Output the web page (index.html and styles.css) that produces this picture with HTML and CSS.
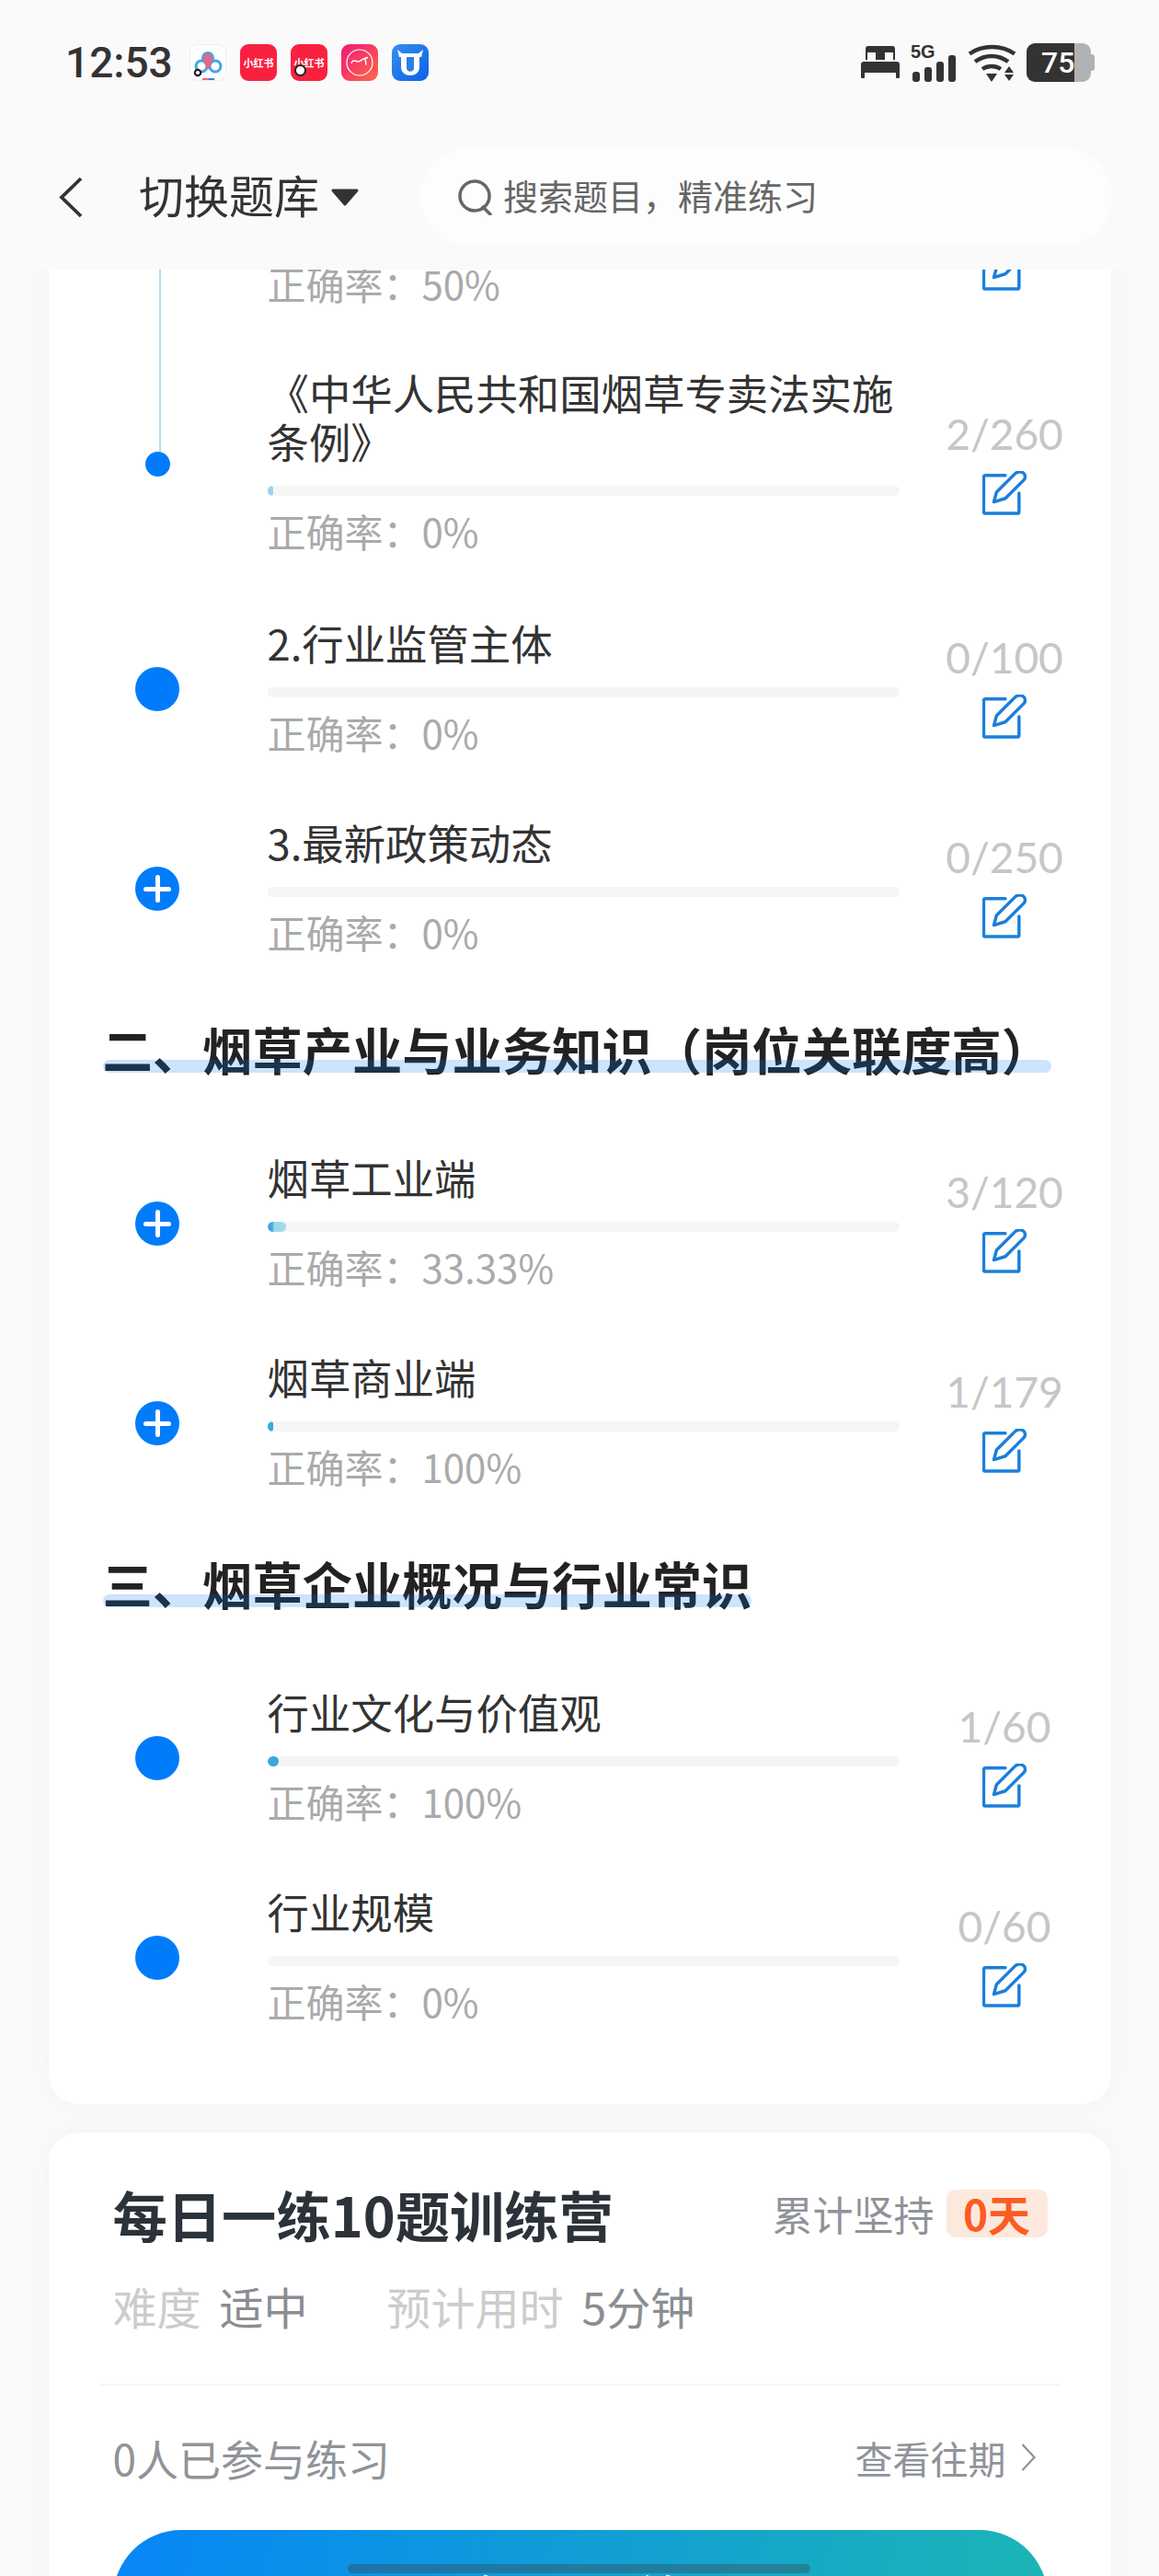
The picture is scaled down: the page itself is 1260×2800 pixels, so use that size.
FILE: index.html
```html
<!DOCTYPE html>
<html lang="zh">
<head>
<meta charset="utf-8">
<title>切换题库</title>
<link rel="stylesheet" href="styles.css">
</head>
<body>
<svg class="defs" width="0" height="0"><symbol id="edit" viewBox="0 0 50 50"><path d="M26 5H3.500a2 2 0 0 0-2 2v39a2 2 0 0 0 2 2h36a2 2 0 0 0 2-2V25M13 35l3-11L37 3c2-2 6-3 9-1s3 6 1 8L26 31z"/></symbol></svg>
<div class="screen">
  <main class="scroller">
    <section class="card tree">
      <div class="row row-cut">
        <div class="node"><span class="line line-cut"></span></div>
        <div class="info"><div class="rate">正确率：50%</div></div>
        <div class="side"><svg class="edit"><use href="#edit"/></svg></div>
      </div>
      <div class="row row-two">
        <div class="node"><span class="line"></span><span class="dot dot-small"></span></div>
        <div class="info">
          <div class="name">《中华人民共和国烟草专卖法实施条例》</div>
          <div class="bar"><span class="fill fill-a" style="width:6px"></span></div>
          <div class="rate">正确率：0%</div>
        </div>
        <div class="side"><div class="count">2/260</div><svg class="edit"><use href="#edit"/></svg></div>
      </div>
      <div class="row">
        <div class="node"><span class="dot"></span></div>
        <div class="info">
          <div class="name">2.行业监管主体</div>
          <div class="bar"></div>
          <div class="rate">正确率：0%</div>
        </div>
        <div class="side"><div class="count">0/100</div><svg class="edit"><use href="#edit"/></svg></div>
      </div>
      <div class="row">
        <div class="node"><span class="dot dot-plus"></span></div>
        <div class="info">
          <div class="name">3.最新政策动态</div>
          <div class="bar"></div>
          <div class="rate">正确率：0%</div>
        </div>
        <div class="side"><div class="count">0/250</div><svg class="edit"><use href="#edit"/></svg></div>
      </div>

      <h2 class="section"><span class="section-text">二、烟草产业与业务知识（岗位关联度高）</span></h2>

      <div class="row">
        <div class="node"><span class="dot dot-plus"></span></div>
        <div class="info">
          <div class="name">烟草工业端</div>
          <div class="bar"><span class="fill fill-b" style="width:20px"></span></div>
          <div class="rate">正确率：33.33%</div>
        </div>
        <div class="side"><div class="count">3/120</div><svg class="edit"><use href="#edit"/></svg></div>
      </div>
      <div class="row">
        <div class="node"><span class="dot dot-plus"></span></div>
        <div class="info">
          <div class="name">烟草商业端</div>
          <div class="bar"><span class="fill fill-c" style="width:6px"></span></div>
          <div class="rate">正确率：100%</div>
        </div>
        <div class="side"><div class="count">1/179</div><svg class="edit"><use href="#edit"/></svg></div>
      </div>

      <h2 class="section"><span class="section-text">三、烟草企业概况与行业常识</span></h2>

      <div class="row">
        <div class="node"><span class="dot"></span></div>
        <div class="info">
          <div class="name">行业文化与价值观</div>
          <div class="bar"><span class="fill fill-c" style="width:12px"></span></div>
          <div class="rate">正确率：100%</div>
        </div>
        <div class="side"><div class="count">1/60</div><svg class="edit"><use href="#edit"/></svg></div>
      </div>
      <div class="row">
        <div class="node"><span class="dot"></span></div>
        <div class="info">
          <div class="name">行业规模</div>
          <div class="bar"></div>
          <div class="rate">正确率：0%</div>
        </div>
        <div class="side"><div class="count">0/60</div><svg class="edit"><use href="#edit"/></svg></div>
      </div>
    </section>

    <section class="card camp">
      <div class="camp-head">
        <h2 class="camp-title">每日一练10题训练营</h2>
        <div class="streak">累计坚持<span class="streak-badge">0天</span></div>
      </div>
      <div class="meta">
        <span class="meta-label">难度</span><span class="meta-value meta-first">适中</span>
        <span class="meta-label">预计用时</span><span class="meta-value">5分钟</span>
      </div>
      <div class="camp-foot">
        <span class="joined">0人已参与练习</span>
        <span class="history">查看往期<svg class="chev" viewBox="0 0 16 32"><path d="M1.500 2l13 14-13 14"/></svg></span>
      </div>
      <div class="start">每日一练</div>
    </section>
  </main>

  <div class="scrollbar"></div>

  <header class="top">
    <div class="status">
      <div class="status-left">
        <span class="clock">12:53</span>
        <div class="apps">
          <svg class="app" viewBox="0 0 40 40"><rect x=".5" y=".5" width="39" height="39" rx="8" fill="#fff" stroke="#eee"/><circle cx="13" cy="24" r="6" fill="none" stroke="#3fa5e8" stroke-width="3"/><circle cx="28" cy="24" r="6" fill="none" stroke="#3fa5e8" stroke-width="3"/><circle cx="20" cy="15" r="6" fill="#e2688a" stroke="#3fa5e8" stroke-width="2"/><path d="M20 28l-5-9h10z" fill="#e2688a"/><circle cx="9" cy="31" r="3.200" fill="#fff" stroke="#222" stroke-width="2.200"/><rect x="14" y="37" width="7" height="2" fill="#e2688a"/><rect x="21" y="37" width="6" height="2" fill="#3b7fe0"/></svg>
          <div class="app app-red"><span class="app-text">小红书</span></div>
          <div class="app app-red app-flag"><span class="app-text">小红书</span></div>
          <svg class="app" viewBox="0 0 40 40"><defs><linearGradient id="pk" x1="0" y1="0" x2="1" y2="1"><stop offset="0" stop-color="#f0187c"/><stop offset="1" stop-color="#fd6a45"/></linearGradient></defs><rect width="40" height="40" rx="9" fill="url(#pk)"/><circle cx="20" cy="20" r="14" fill="none" stroke="#fff" stroke-width="1.200"/><path d="M11 21c1-4 3-3 5-2.500s4 .5 5-.5 6-3 8-3.500l-3 1 1 7" fill="none" stroke="#fff" stroke-width="1.500"/></svg>
          <svg class="app" viewBox="0 0 40 40"><defs><linearGradient id="bl" x1="0" y1="0" x2="1" y2="1"><stop offset="0" stop-color="#3390ee"/><stop offset="1" stop-color="#0f5fe6"/></linearGradient></defs><rect width="40" height="40" rx="9" fill="url(#bl)"/><path d="M6 6l5 4h18l5-4-2 8h-2v11c0 12-20 12-20 0V14H8z" fill="#fff"/><path d="M16 14v12c0 5 8 5 8 0V14z" fill="#2a7fe8"/></svg>
        </div>
      </div>
      <div class="status-right">
        <svg class="bed" viewBox="0 0 42 35"><path d="M8 0h26a3 3 0 0 1 3 3v12h-2V7h-9v8h-10V7H7v8H5V3a3 3 0 0 1 3-3zM3 17h36a3 3 0 0 1 3 3v14a1 1 0 0 1-1 1h-2a1 1 0 0 1-1-1v-5H4v5a1 1 0 0 1-1 1H1a1 1 0 0 1-1-1V20a3 3 0 0 1 3-3z" fill="#333"/></svg>
        <div class="signal">
          <span class="signal-5g">5G</span>
          <span class="bars"><i class="b1"></i><i class="b2"></i><i class="b3"></i><i class="b4"></i></span>
        </div>
        <svg class="wifi" viewBox="0 0 53 41"><path d="M2 10.500c14-10 35-10 49 0M8 19c11-8 25-8 36 0M16 27c6-4 14-4 20 0" fill="none" stroke="#333" stroke-width="4.500"/><path d="M20 32h12l-6 9zM45 24l5 7H40zM40 33h10l-5 7z" fill="#333"/></svg>
        <div class="battery"><span class="battery-num">75</span></div>
      </div>
    </div>
    <div class="nav">
      <svg class="back" viewBox="0 0 26 45"><path d="M24 2L3 22.500 24 43"/></svg>
      <div class="switch"><span class="switch-text">切换题库</span><svg class="caret" viewBox="0 0 32 19"><path d="M3 2h26L16 17z"/></svg></div>
      <div class="search">
        <svg class="search-icon" viewBox="0 0 39 39"><circle cx="18" cy="18" r="16"/><path d="M26 29l10 10"/></svg>
        <span class="search-text">搜索题目，精准练习</span>
      </div>
    </div>
  </header>
</div>
</body>
</html>
```
FILE: styles.css
```css
* { box-sizing: border-box; }
html, body { margin: 0; padding: 0; }
body {
  background: #fafafa;
  font-family: "Noto Sans CJK SC", "Liberation Sans", sans-serif;
  color: #333;
}
.defs { position: absolute; }
.screen {
  position: relative;
  width: 1260px;
  height: 2800px;
  overflow: hidden;
  background: #fafafa;
}

/* header */
.top {
  position: absolute;
  top: 0;
  left: 0;
  width: 1260px;
  height: 293px;
  background: #fafafa;
}
.status {
  height: 161px;
  padding: 47px 70px 0 71px;
  display: flex;
  justify-content: space-between;
  align-items: flex-start;
}
.status-left { display: flex; align-items: flex-start; }
.clock {
  font-family: Roboto, "Liberation Sans", sans-serif;
  font-size: 46px;
  line-height: 48px;
  font-weight: 500;
  color: #333;
  width: 135px;
  margin-top: -3px;
}
.apps { display: flex; gap: 15px; margin-top: 1px; }
.app { width: 40px; height: 40px; display: block; flex: none; }
.app-red {
  position: relative;
  border-radius: 9px;
  background: #fa2140;
  display: flex;
  align-items: center;
  justify-content: center;
}
.app-text {
  color: #fff;
  font-size: 11px;
  font-weight: 700;
  line-height: 14px;
  white-space: nowrap;
}
.app-flag::after {
  content: "";
  position: absolute;
  left: 4px;
  bottom: 5px;
  width: 9px;
  height: 9px;
  border-radius: 50%;
  background: #fff;
  border: 2.500px solid #222;
}
.status-right { display: flex; align-items: flex-start; }
.bed { width: 42px; height: 35px; margin-top: 3px; }
.signal { position: relative; width: 49px; height: 41px; margin: 1px 13px 0 12px; }
.signal-5g {
  position: absolute;
  top: 0;
  left: 0;
  font-family: "Liberation Sans", sans-serif;
  font-size: 21px;
  line-height: 16px;
  font-weight: 700;
  color: #333;
  transform: scaleX(.95);
  transform-origin: left;
}
.bars { position: absolute; left: 2px; bottom: 0; display: flex; align-items: flex-end; gap: 5px; }
.bars i { display: block; width: 8px; background: #333; border-radius: 3px; }
.b1 { height: 11px; }
.b2 { height: 16px; }
.b3 { height: 22px; }
.b4 { height: 29px; }
.wifi { width: 53px; height: 41px; margin-top: 1px; margin-right: 11px; }
.battery {
  position: relative;
  width: 70px;
  height: 42px;
  border-radius: 9px;
  background: linear-gradient(90deg, #333 0, #333 52px, #b2b2b2 52px);
  margin-right: 4px;
  display: flex;
  align-items: center;
}
.battery::after {
  content: "";
  position: absolute;
  right: -4px;
  top: 12px;
  width: 4px;
  height: 18px;
  background: #b2b2b2;
  border-radius: 0 3px 3px 0;
}
.battery-num {
  font-family: Roboto, "Liberation Sans", sans-serif;
  font-size: 32px;
  font-weight: 500;
  line-height: 42px;
  color: #fff;
  margin-left: 16px;
}
.nav {
  height: 106px;
  padding-left: 64px;
  display: flex;
  align-items: center;
}
.back {
  width: 26px;
  height: 45px;
  fill: none;
  stroke: #333;
  stroke-width: 3.800;
  flex: none;
}
.switch {
  margin-left: 61px;
  font-size: 49px;
  line-height: 60px;
  color: #333;
  display: flex;
  align-items: center;
  flex: none;
}
.switch-text { margin-bottom: 6px; }
.caret {
  width: 32px;
  height: 19px;
  margin-left: 12px;
  margin-top: 1px;
  fill: #333;
  stroke: #333;
  stroke-width: 3;
  stroke-linejoin: round;
}
.search {
  margin-left: 66px;
  width: 752px;
  height: 106px;
  border-radius: 53px;
  background: #fdfdfd;
  display: flex;
  align-items: center;
  padding-left: 41px;
  font-size: 38px;
  color: #666;
  flex: none;
}
.search-text { margin-bottom: 6px; }
.search-icon {
  width: 39px;
  height: 39px;
  margin-right: 10px;
  fill: none;
  stroke: #666;
  stroke-width: 3.500;
  flex: none;
}

/* cards */
.scroller {
  display: flex;
  flex-direction: column;
  align-items: center;
  gap: 31px;
}
.card {
  width: 1155px;
  background: #fff;
  border-radius: 32px;
  box-shadow: 0 0 30px rgba(0, 0, 0, .035);
}
.tree {
  margin-top: 236px;
  height: 2051px;
  border-radius: 0 0 32px 32px;
}

/* tree rows */
.row {
  display: flex;
  height: 217px;
}
.row-cut { height: 166px; }
.row-cut .info { padding-top: 47px; }
.row-cut .rate { margin-top: 0; }
.row-cut .side { padding-top: 32px; }
.row-cut .edit { margin-top: 0; }
.row-two { height: 272px; padding-top: 0; }
.row-two .side { padding-top: 42px; }
.node {
  position: relative;
  width: 238px;
  flex: none;
}
.info { width: 687px; flex: none; }
.name {
  font-size: 45.400px;
  line-height: 53px;
  color: #333;
  margin-top: -2px;
}
.bar {
  height: 11px;
  border-radius: 5.500px;
  background: #f5f5f5;
  margin-top: 22px;
  overflow: hidden;
}
.fill { display: block; height: 11px; border-radius: 5.500px; }
.fill-a { background: #9bd3ee; }
.fill-b { background: linear-gradient(90deg, #3ea9dc 0, #3ea9dc 5px, #9dd5ec 7px, #a6dbef 100%); }
.fill-c { background: #3aa8dc; }
.rate {
  font-size: 42px;
  line-height: 50px;
  margin-top: 13px;
  color: #aaa;
}
.dot {
  position: absolute;
  left: 94.500px;
  top: 51px;
  width: 48px;
  height: 48px;
  border-radius: 50%;
  background: #007cfb;
}
.dot-plus::before, .dot-plus::after {
  content: "";
  position: absolute;
  background: #fff;
  border-radius: 3px;
}
.dot-plus::before { left: 9px; top: 21.500px; width: 30px; height: 5px; }
.dot-plus::after { left: 21.500px; top: 9px; width: 5px; height: 30px; }
.dot.dot-small { width: 27px; height: 27px; left: 105px; top: 89px; }
.line {
  position: absolute;
  left: 120px;
  top: 0;
  width: 2px;
  height: 95px;
  background: #b6dcf2;
}
.line-cut { height: 166px; }
.side {
  width: 229px;
  flex: none;
  display: flex;
  flex-direction: column;
  align-items: center;
  padding-top: 13px;
}
.count {
  font-family: Lato, "Liberation Sans", sans-serif;
  font-size: 46px;
  line-height: 56px;
  color: #c6c6c6;
}
.edit {
  width: 48px;
  height: 48px;
  margin-top: 12px;
  fill: none;
  stroke: #1a7fdb;
  stroke-width: 3.600;
  stroke-linejoin: round;
  stroke-linecap: round;
}
.section {
  margin: 0 0 0 59px;
  height: 147px;
  font-size: 54.300px;
  line-height: 64px;
  font-weight: 700;
  color: #222;
}
.section-text {
  display: inline-block;
  position: relative;
  height: 58px;
}
.section-text::after {
  content: "";
  position: absolute;
  left: 0;
  right: 0;
  bottom: 0;
  height: 14px;
  border-radius: 7px;
  background: rgba(0, 120, 240, .2);
}

/* camp */
.camp {
  height: 600px;
  padding: 52px 69px 0 70px;
}
.camp-head { display: flex; justify-content: space-between; align-items: center; height: 72px; }
.camp-title {
  margin: 0;
  font-size: 59.300px;
  line-height: 72px;
  font-weight: 700;
  color: #2c3239;
}
.streak { display: flex; align-items: center; font-size: 44px; line-height: 56px; color: #909399; }
.streak-badge {
  margin-left: 13px;
  width: 110px;
  height: 52px;
  border-radius: 10px;
  background: #fde8dd;
  color: #fa5d22;
  font-weight: 700;
  font-size: 46px;
  line-height: 50px;
  text-align: center;
}
.meta { display: flex; align-items: center; height: 56px; margin-top: 36px; font-size: 48px; line-height: 56px; }
.meta-label { color: #ccc; }
.meta-value { color: #8a8d92; margin-left: 20px; }
.meta-first { margin-right: 86px; }
.camp-foot {
  margin: 57px -14px 0 -15px;
  padding: 50px 27px 0 15px;
  border-top: 2px solid #f6f6f6;
  display: flex;
  justify-content: space-between;
  align-items: flex-start;
  height: 112px;
  font-size: 46px;
  line-height: 56px;
  color: #909399;
}
.history { display: flex; align-items: center; color: #909399; font-size: 41px; }
.chev {
  width: 16px;
  height: 32px;
  margin-left: 16px;
  fill: none;
  stroke: #909399;
  stroke-width: 2.200;
}
.start {
  margin: 47px 0 0 0;
  height: 148px;
  border-radius: 74px;
  background: linear-gradient(100deg, #0686f7, #1cb6b4);
  color: #fff;
  font-size: 60px;
  line-height: 148px;
  text-align: center;
}
.scrollbar {
  position: absolute;
  left: 378px;
  top: 2787px;
  width: 503px;
  height: 10px;
  border-radius: 5px;
  background: rgba(60, 60, 60, .35);
  z-index: 2;
}
```
